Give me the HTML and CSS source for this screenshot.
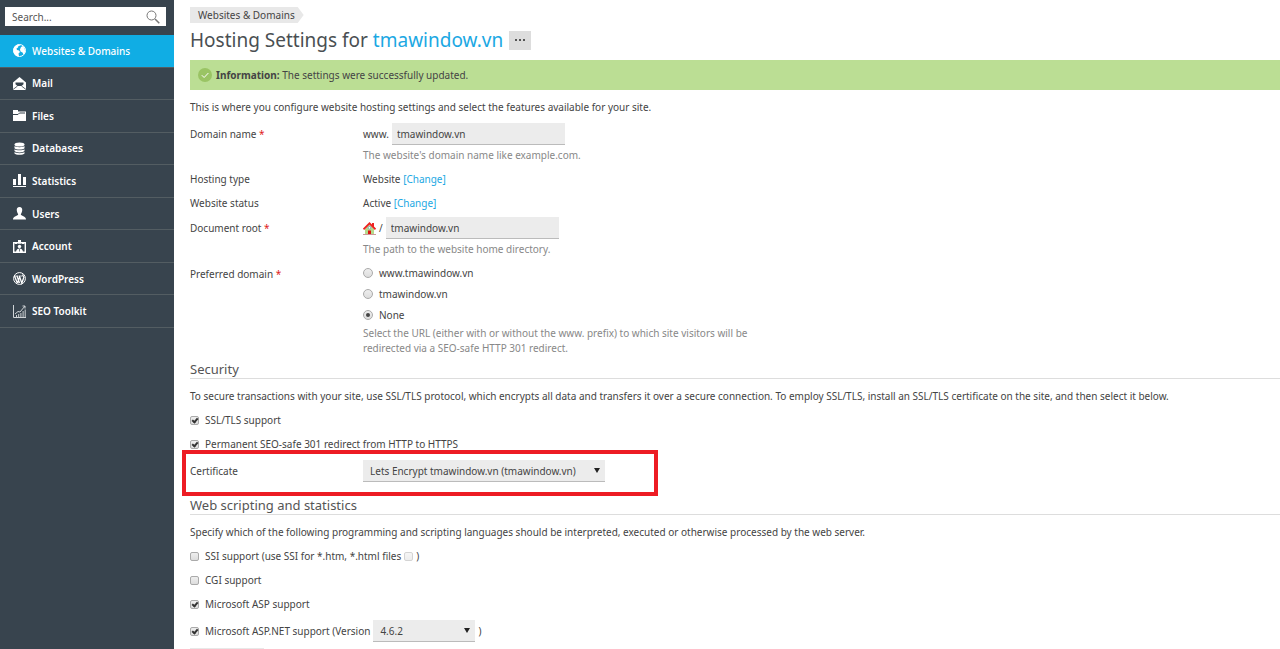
FILE: index.html
```html
<!DOCTYPE html>
<html lang="en">
<head>
    <meta charset="UTF-8">
    <meta name="viewport" content="width=device-width, initial-scale=1.0">
    <title>Hosting Settings for tmawindow.vn</title>
    <link rel="stylesheet" href="styles.css">
</head>
<body>
    <div class="page">
        <aside class="sidebar">
            <form class="search" role="search">
                <input type="text" class="search-input" placeholder="Search..." aria-label="Search">
                <button type="submit" class="search-button" aria-label="Search">
                    <svg width="14" height="14" viewBox="0 0 14 14" fill="none" stroke="#777"><circle cx="5.5" cy="5.5" r="4.5"/><path d="M9 9l4.300 4.300" stroke-width="1.500"/></svg>
                </button>
            </form>
            <nav>
                <ul class="nav">
                    <li><a href="#" class="nav-link active">
                        <svg class="icon" viewBox="0 0 13 13"><circle cx="6.500" cy="6.500" r="6" fill="none" stroke="#fff"/><path d="M.5 5C1 2 3.500.5 6.500.5L7.500 1.500 5.500 2 5 3.500 3.500 4.500 4 6 6 6.500 7 8 5.500 9.500 6 12.500C2 12.500 0 9 .5 5zM8 3l2-1 1.500 2 .8 4-1.800 2.500L9.500 8.500 7.500 7.500 7 5.500z" fill="#fff"/></svg>
                        Websites &amp; Domains</a></li>
                    <li><a href="#" class="nav-link">
                        <svg class="icon" viewBox="0 0 13 13"><path d="M0 5.500L6.500 0 13 5.500V13H0z" fill="#fff"/><path d="M2.500 5.500h8v1.700L8.500 9h-4l-2-1.800z" fill="#38444e"/><path d="M0 12.500L4.500 9M13 12.500L8.500 9" stroke="#38444e" stroke-width=".8"/></svg>
                        Mail</a></li>
                    <li><a href="#" class="nav-link">
                        <svg class="icon" viewBox="0 0 13 13"><path d="M0 1h5v1.500h8V12H0z" fill="#fff"/><path d="M0 5.500h5l1.500-1.500H12" fill="none" stroke="#38444e"/></svg>
                        Files</a></li>
                    <li><a href="#" class="nav-link">
                        <svg class="icon" viewBox="0 0 13 13" fill="#fff"><ellipse cx="6.500" cy="2.500" rx="5" ry="2"/><path d="M1.500 4c1 1.500 9 1.500 10 0v2.300c-1 1.700-9 1.700-10 0z"/><path d="M1.500 7.200c1 1.500 9 1.500 10 0v1.900c-1 1.700-9 1.700-10 0z"/><path d="M1.500 10c1 1.500 9 1.500 10 0v1.500c-1 1.700-9 1.700-10 0z"/></svg>
                        Databases</a></li>
                    <li><a href="#" class="nav-link">
                        <svg class="icon" viewBox="0 0 13 13" fill="#fff"><path d="M0 5h3v6H0zM5 0h3v11H5zM10 3h3v8h-3zM0 12h13v1H0z"/></svg>
                        Statistics</a></li>
                    <li><a href="#" class="nav-link">
                        <svg class="icon" viewBox="0 0 13 13" fill="#fff"><path d="M6.500 0C8.500 0 9.500 1.500 9.200 3.500 9 5.500 8 6.500 7.800 7.500c0 1.200 5.200 1.500 5.200 5H0c0-3.500 5.200-3.800 5.200-5C5 6.500 4 5.500 3.800 3.500 3.500 1.500 4.500 0 6.500 0z"/></svg>
                        Users</a></li>
                    <li><a href="#" class="nav-link">
                        <svg class="icon" viewBox="0 0 13 13"><path d="M.7 2.700h11.600v9.600H.7z" fill="none" stroke="#fff" stroke-width="1.400"/><path d="M5 0h3v3.500H5zM2 3h2v1H2zM9 3h2v1H9z" fill="#fff"/><circle cx="6.500" cy="6.500" r="1.700" fill="#fff"/><path d="M3 12c0-2.500 2-3.500 3.500-3.500S10 9.500 10 12z" fill="#fff"/><path d="M6.500 9v2.500" stroke="#38444e" stroke-width=".7"/></svg>
                        Account</a></li>
                    <li><a href="#" class="nav-link">
                        <svg class="icon" viewBox="0 0 13 13" fill="none" stroke="#fff"><circle cx="6.500" cy="6.500" r="5.900"/><path d="M1.500 4l2.800 7M4 4l2.500 7M6.700 5l-2.200 6" stroke-width="1.300"/><path d="M6.300 4l2.500 7 2-5.500C11 4.500 9.500 4 9.700 2.500" stroke-width="1.300"/><path d="M1 4h4M5.500 4h3.500" stroke-width=".8"/></svg>
                        WordPress</a></li>
                    <li><a href="#" class="nav-link">
                        <svg class="icon" viewBox="0 0 13 13" fill="none" stroke="#cfd3d6"><path d="M.5 0v12.500H13M2 9l3-2.500 2 .5 5-6M9.500 1H12v2.500"/><path d="M3.500 12v-2M5.700 12V9M7.900 12V8M10.100 12V6M12.200 12V4.500"/></svg>
                        SEO Toolkit</a></li>
                </ul>
            </nav>
        </aside>

        <main class="content">
            <a href="#" class="breadcrumb">Websites &amp; Domains</a>
            <div class="heading">
                <h1>Hosting Settings for <a href="#">tmawindow.vn</a></h1>
                <button type="button" class="more" aria-label="More"><i></i><i></i><i></i></button>
            </div>
            <div class="message">
                <svg width="14" height="14" viewBox="0 0 14 14"><circle cx="7" cy="7" r="7" fill="#9ac464"/><path d="M3.800 7.200l2.300 2.300 4.300-4.500" fill="none" stroke="#fff"/></svg>
                <p><b>Information:</b> The settings were successfully updated.</p>
            </div>
            <p class="description">This is where you configure website hosting settings and select the features available for your site.</p>

            <form>
                <div class="row row-input">
                    <label for="domain">Domain name <span class="required">*</span></label>
                    <div>
                        <div class="field"><span>www.</span><input type="text" id="domain" class="text-input" value="tmawindow.vn"></div>
                        <p class="hint">The website's domain name like example.com.</p>
                    </div>
                </div>
                <div class="row">
                    <span>Hosting type</span>
                    <div>Website <a href="#">[Change]</a></div>
                </div>
                <div class="row">
                    <span>Website status</span>
                    <div>Active <a href="#">[Change]</a></div>
                </div>
                <div class="row row-input">
                    <label for="root">Document root <span class="required">*</span></label>
                    <div>
                        <div class="field">
                            <svg width="13" height="13" viewBox="0 0 13 13"><path d="M2 6.500L6.500 2 11 6.500V12H2z" fill="#b5d98b"/><path d="M9 1h2v4H9z" fill="#e22"/><path d="M.5 7.300L6.500 1.300l6 6" fill="none" stroke="#e22" stroke-width="1.800"/><circle cx="6.500" cy="5.800" r="1.300" fill="#fff" stroke="#8ab"/><path d="M5 8.500h3V13H5z" fill="#d11"/><path d="M0 12.500h13" stroke="#c99"/></svg>
                            <span>/</span><input type="text" id="root" class="text-input" value="tmawindow.vn">
                        </div>
                        <p class="hint">The path to the website home directory.</p>
                    </div>
                </div>
                <div class="row">
                    <span>Preferred domain <span class="required">*</span></span>
                    <div>
                        <div class="radios">
                            <label class="option"><input type="radio" name="preferred">www.tmawindow.vn</label>
                            <label class="option"><input type="radio" name="preferred">tmawindow.vn</label>
                            <label class="option"><input type="radio" name="preferred" checked>None</label>
                        </div>
                        <p class="hint">Select the URL (either with or without the www. prefix) to which site visitors will be redirected via a SEO-safe HTTP 301 redirect.</p>
                    </div>
                </div>

                <h2>Security</h2>
                <p class="text">To secure transactions with your site, use SSL/TLS protocol, which encrypts all data and transfers it over a secure connection. To employ SSL/TLS, install an SSL/TLS certificate on the site, and then select it below.</p>
                <div class="check-row"><label class="option"><input type="checkbox" checked>SSL/TLS support</label></div>
                <div class="check-row"><label class="option"><input type="checkbox" checked>Permanent SEO-safe 301 redirect from HTTP to HTTPS</label></div>
                <div class="row highlight">
                    <label for="certificate">Certificate</label>
                    <div class="select-box certificate"><select id="certificate"><option>Lets Encrypt tmawindow.vn (tmawindow.vn)</option></select></div>
                </div>

                <h2>Web scripting and statistics</h2>
                <p class="text">Specify which of the following programming and scripting languages should be interpreted, executed or otherwise processed by the web server.</p>
                <div class="check-row">
                    <label class="option"><input type="checkbox">SSI support (use SSI for *.htm, *.html files</label>
                    <input type="checkbox" aria-label="Use SSI for html files" disabled><span>)</span>
                </div>
                <div class="check-row"><label class="option"><input type="checkbox">CGI support</label></div>
                <div class="check-row"><label class="option"><input type="checkbox" checked>Microsoft ASP support</label></div>
                <div class="check-row">
                    <label class="option"><input type="checkbox" checked>Microsoft ASP.NET support (Version</label>
                    <div class="select-box version"><select aria-label="ASP.NET version"><option>4.6.2</option></select></div><span>)</span>
                </div>
                <button type="button" class="button" aria-label="Restore defaults"></button>
            </form>
        </main>
    </div>
</body>
</html>
```
FILE: styles.css
```css
*, *::before, *::after {
    box-sizing: border-box;
}
body {
    margin: 0;
    font: 10px/16px "Noto Sans", "Open Sans", sans-serif;
    color: #444;
    background: #fff;
}
h1, h2, p, ul {
    margin: 0;
    padding: 0;
    font-weight: normal;
}
a {
    color: #1ba8e3;
    text-decoration: none;
}
input, select, button {
    font: inherit;
    color: inherit;
    margin: 0;
    border: 0;
    border-radius: 0;
}
.page {
    display: flex;
    height: 100vh;
    overflow: hidden;
}

/* sidebar */
.sidebar {
    flex: none;
    width: 174px;
    background: #38444e;
}
.search {
    display: flex;
    align-items: center;
    height: 19px;
    margin: 7px 8px 9px 5px;
    background: #fff;
}
.search-input {
    flex: 1;
    min-width: 0;
    padding: 0 7px;
    background: none;
}
.search-input::placeholder {
    color: #555;
}
.search-button {
    display: flex;
    padding: 0 6px;
    background: none;
}
.nav {
    display: grid;
    grid-template-rows: repeat(9, 1fr);
    height: 293px;
    list-style: none;
}
.nav-link {
    display: flex;
    align-items: center;
    gap: 6px;
    height: 100%;
    padding-left: 13px;
    border-bottom: 1px solid #535d62;
    color: #fff;
    font-weight: 600;
}
.nav-link.active {
    background: #10ade4;
    font-weight: 500;
}
.icon {
    width: 13px;
    height: 13px;
}

/* page header */
.content {
    flex: 1;
    min-width: 0;
    padding: 7px 0 0 16px;
}
.breadcrumb {
    display: block;
    width: max-content;
    padding: 0 9px 0 8px;
    background: #e8e8e8;
    color: #444;
    clip-path: polygon(0 0, calc(100% - 6px) 0, 100% 50%, calc(100% - 6px) 100%, 0 100%);
}
.heading {
    display: flex;
    align-items: center;
    gap: 6px;
    height: 34px;
    margin-bottom: 3px;
}
h1 {
    color: #4a4f52;
    font-size: 19px;
    line-height: 32px;
}
.more {
    display: flex;
    align-items: center;
    justify-content: center;
    gap: 2px;
    width: 22px;
    height: 19px;
    padding: 0;
    background: #ddd;
}
.more i {
    width: 2px;
    height: 2px;
    background: #555;
}
.message {
    display: flex;
    align-items: center;
    gap: 4px;
    height: 30px;
    padding-left: 8px;
    background: #bbde94;
}
.description {
    margin: 9px 0 10px;
}

/* form */
.row {
    display: grid;
    grid-template-columns: 173px 1fr;
    align-items: baseline;
    margin-bottom: 8px;
}
.row-input {
    margin-top: -2px;
}
.required {
    color: #e02020;
}
.field {
    display: flex;
    align-items: baseline;
    gap: 3px;
}
.field svg {
    align-self: center;
}
.text-input {
    width: 173px;
    height: 22px;
    padding: 0 5px;
    background: #ececec;
    border-bottom: 1px solid #bbb;
}
.hint {
    max-width: 420px;
    padding-top: 3px;
    line-height: 15px;
    color: #888;
}
.option {
    display: inline-flex;
    align-items: center;
    gap: 6px;
}
.radios {
    display: grid;
    gap: 5px;
}
input[type="checkbox"], input[type="radio"] {
    appearance: none;
    position: relative;
    flex: none;
    width: 9px;
    height: 9px;
    border: 1px solid #aaa;
    border-radius: 2px;
    background: linear-gradient(#eee, #ddd);
}
input[type="radio"] {
    width: 10px;
    height: 10px;
    border-radius: 50%;
}
input:disabled {
    opacity: 0.5;
}
input[type="checkbox"]:checked::after {
    content: "";
    position: absolute;
    left: 2px;
    top: 0;
    width: 4px;
    height: 6px;
    border: solid #333;
    border-width: 0 2px 2px 0;
    transform: rotate(40deg);
}
input[type="radio"]:checked::after {
    content: "";
    position: absolute;
    inset: 2px;
    border-radius: 50%;
    background: #444;
}
h2 {
    margin-top: -4px;
    border-bottom: 1px solid #ddd;
    color: #555;
    font-size: 13px;
    line-height: 18px;
}
.text {
    margin: 9px 0 8px;
}
.check-row {
    display: flex;
    align-items: center;
    gap: 3px;
    margin-bottom: 8px;
}
.select-box {
    position: relative;
}
.select-box::after {
    content: "";
    position: absolute;
    right: 5px;
    top: 8px;
    border: solid transparent;
    border-width: 5px 3px 0;
    border-top-color: #222;
}
select {
    appearance: none;
    display: block;
    width: 100%;
    height: 22px;
    padding: 0 7px;
    background: #ececec;
    border-bottom: 1px solid #bbb;
}
.certificate {
    width: 242px;
}
.version {
    width: 102px;
}
.highlight {
    align-items: center;
    position: relative;
    margin-bottom: 18px;
}
.highlight::after {
    content: "";
    position: absolute;
    left: -8px;
    top: -10px;
    width: 476px;
    height: 46px;
    border: 4px solid #ed1c24;
    pointer-events: none;
}
.button {
    display: block;
    width: 74px;
    height: 22px;
    margin-top: -2px;
    background: #e8e8e8;
}
```
